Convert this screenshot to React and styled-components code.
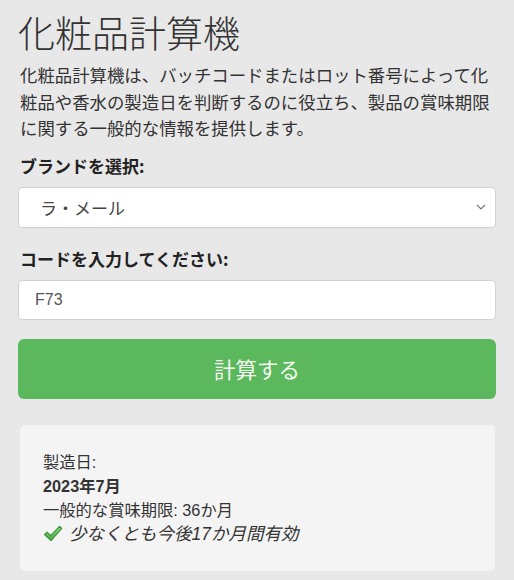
import React from "react";
import styled, { createGlobalStyle } from "styled-components";

const FONT = `"Liberation Sans", "Noto Sans CJK JP", sans-serif`;

const Global = createGlobalStyle`
  html, body { margin: 0; padding: 0; background: #e8e8e8; }
  body { font-family: ${FONT}; color: #333; }
  * { box-sizing: border-box; }
`;

const Page = styled.div`
  display: flex;
  flex-direction: column;
  padding: 10px 18px 8px 18px;
  background: #e8e8e8;
  min-height: 580px;
`;

const Title = styled.h1`
  margin: 0;
  font-family: "Noto Sans CJK JP", sans-serif;
  font-size: 37px;
  line-height: 44px;
  font-weight: 300;
  color: #333;
`;

const Intro = styled.p`
  margin: 8px 0 0 2px;
  font-family: "Noto Sans CJK JP", sans-serif;
  font-size: 17.4px;
  line-height: 26.5px;
  color: #333;
`;

const Label = styled.label`
  display: block;
  margin: ${(p) => p.$top}px 0 9px 2px;
  font-family: "Noto Sans CJK JP", sans-serif;
  font-size: 17px;
  line-height: 24px;
  font-weight: 700;
  color: #222;
`;

const SelectWrap = styled.div`
  position: relative;
`;

const Select = styled.select`
  appearance: none;
  -webkit-appearance: none;
  width: 100%;
  height: 41px;
  padding: 0 36px 0 21px;
  border: 1px solid #d2d2d2;
  border-radius: 4px;
  background: #fff;
  font-family: "Noto Sans CJK JP", sans-serif;
  font-size: 17px;
  color: #444;
  outline: none;
`;

const Chevron = styled.svg`
  position: absolute;
  right: 10px;
  top: 16px;
  width: 10px;
  height: 8px;
  pointer-events: none;
`;

const Input = styled.input`
  width: 100%;
  height: 40px;
  padding: 0 16px;
  border: 1px solid #d2d2d2;
  border-radius: 4px;
  background: #fff;
  font-family: "Liberation Sans", sans-serif;
  font-size: 16px;
  color: #555;
  outline: none;
`;

const Button = styled.button`
  margin-top: 19px;
  width: 100%;
  height: 60px;
  border: none;
  border-radius: 6px;
  background: #5cb85c;
  color: #f4f8f2;
  font-family: "Noto Sans CJK JP", sans-serif;
  font-size: 21.5px;
  cursor: pointer;
`;

const Card = styled.div`
  margin: 26px 1px 0 2px;
  padding: 25px 23px;
  background: #f4f4f4;
  border-radius: 5px;
  display: flex;
  flex-direction: column;
`;

const Line = styled.div`
  font-family: ${FONT};
  font-size: ${(p) => (p.$italic ? "17.5px" : "16.3px")};
  line-height: 24px;
  color: #333;
  font-weight: ${(p) => (p.$bold ? 700 : 400)};
  font-style: ${(p) => (p.$italic ? "italic" : "normal")};
  display: flex;
  align-items: center;
  gap: 6px;
`;

const Check = () => (
  <svg width="20" height="17" viewBox="0 0 20 17">
    <defs>
      <linearGradient id="cg" x1="0" y1="0" x2="0" y2="1">
        <stop offset="0" stopColor="#8be07a" />
        <stop offset="1" stopColor="#3ea83e" />
      </linearGradient>
    </defs>
    <path
      d="M1.5 9.5 L4.2 7.2 L7.6 10.6 L16.6 1.4 L18.8 3.4 L8 15.6 Z"
      fill="url(#cg)"
      stroke="#3d8f3a"
      strokeWidth="1.1"
      strokeLinejoin="round"
    />
  </svg>
);

export default function App() {
  return (
    <>
      <Global />
      <Page>
        <Title>化粧品計算機</Title>
        <Intro>
          化粧品計算機は、バッチコードまたはロット番号によって化粧品や香水の製造日を判断するのに役立ち、製品の賞味期限に関する一般的な情報を提供します。
        </Intro>
        <Label $top={12}>ブランドを選択:</Label>
        <SelectWrap>
          <Select defaultValue="lamer">
            <option value="lamer">ラ・メール</option>
          </Select>
          <Chevron viewBox="0 0 10 8">
            <path d="M1 2 L5 6 L9 2" fill="none" stroke="#777" strokeWidth="1.2" />
          </Chevron>
        </SelectWrap>
        <Label $top={19}>コードを入力してください:</Label>
        <Input defaultValue="F73" />
        <Button>計算する</Button>
        <Card>
          <Line>製造日:</Line>
          <Line $bold>2023年7月</Line>
          <Line>一般的な賞味期限: 36か月</Line>
          <Line $italic>
            <Check />
            少なくとも今後17か月間有効
          </Line>
        </Card>
      </Page>
    </>
  );
}
